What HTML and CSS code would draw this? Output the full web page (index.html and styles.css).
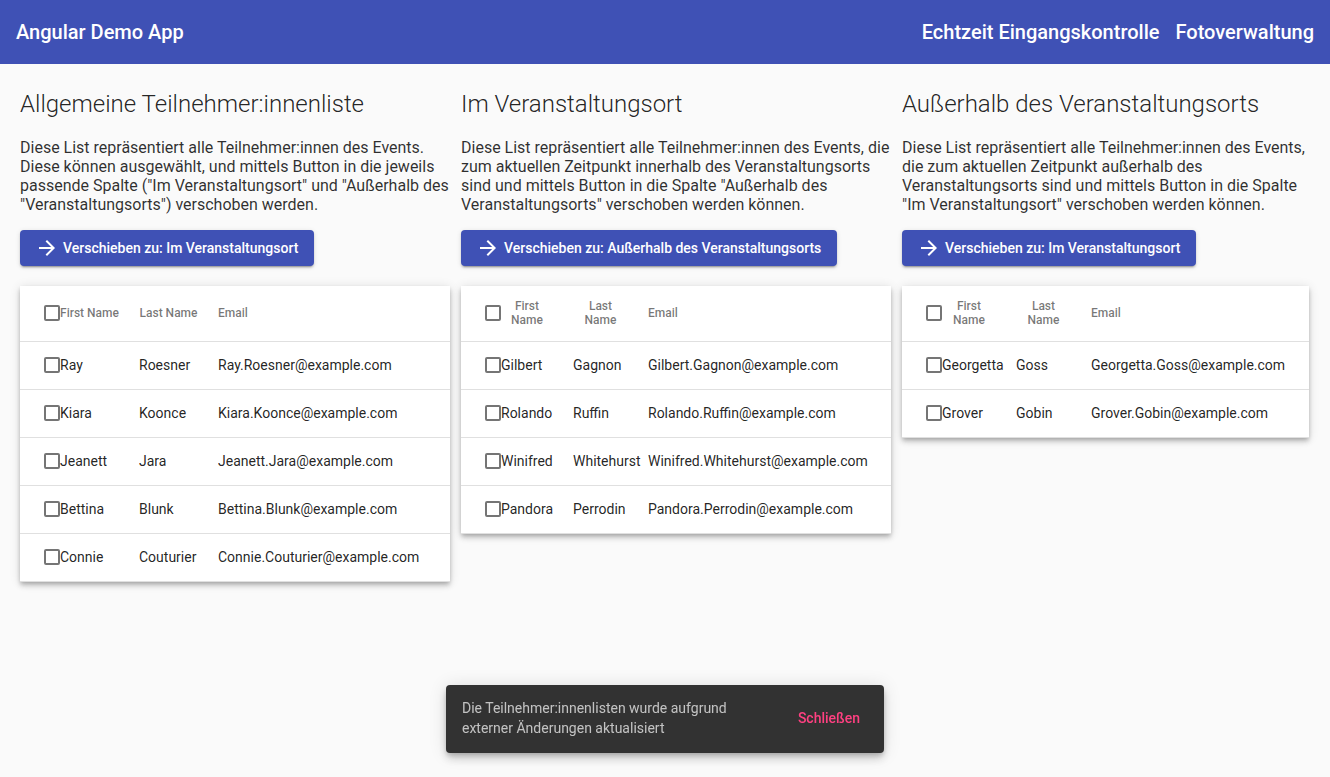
FILE: index.html
```html
<!DOCTYPE html>
<html lang="de">
<head>
<meta charset="utf-8">
<title>Angular Demo App</title>
<link rel="stylesheet" href="styles.css">
</head>
<body>
<header class="toolbar">
  <span class="app-title">Angular Demo App</span>
  <nav class="nav">
    <a class="nav-link">Echtzeit Eingangskontrolle</a>
    <a class="nav-link">Fotoverwaltung</a>
  </nav>
</header>

<main class="columns">
  <section class="column">
    <h2 class="column-title">Allgemeine Teilnehmer:innenliste</h2>
    <p class="column-text">Diese List repräsentiert alle Teilnehmer:innen des Events. Diese können ausgewählt, und mittels Button in die jeweils passende Spalte ("Im Veranstaltungsort" und "Außerhalb des "Veranstaltungsorts") verschoben werden.</p>
    <button class="move-btn"><svg class="arrow" viewBox="0 0 24 24" width="24" height="24"><path d="M12 4l-1.41 1.41L16.17 11H4v2h12.17l-5.58 5.59L12 20l8-8z" fill="#fff"/></svg><span>Verschieben zu: Im Veranstaltungsort</span></button>
    <div class="card table t1">
      <div class="row header-row"><div class="cell select"><span class="checkbox"></span></div><div class="cell hcell"><span>First Name</span></div><div class="cell hcell"><span>Last Name</span></div><div class="cell hcell email">Email</div></div>
      <div class="row"><div class="cell select"><span class="checkbox"></span></div><div class="cell">Ray</div><div class="cell">Roesner</div><div class="cell email">Ray.Roesner@example.com</div></div>
      <div class="row"><div class="cell select"><span class="checkbox"></span></div><div class="cell">Kiara</div><div class="cell">Koonce</div><div class="cell email">Kiara.Koonce@example.com</div></div>
      <div class="row"><div class="cell select"><span class="checkbox"></span></div><div class="cell">Jeanett</div><div class="cell">Jara</div><div class="cell email">Jeanett.Jara@example.com</div></div>
      <div class="row"><div class="cell select"><span class="checkbox"></span></div><div class="cell">Bettina</div><div class="cell">Blunk</div><div class="cell email">Bettina.Blunk@example.com</div></div>
      <div class="row"><div class="cell select"><span class="checkbox"></span></div><div class="cell">Connie</div><div class="cell">Couturier</div><div class="cell email">Connie.Couturier@example.com</div></div>
    </div>
  </section>

  <section class="column">
    <h2 class="column-title">Im Veranstaltungsort</h2>
    <p class="column-text">Diese List repräsentiert alle Teilnehmer:innen des Events, die zum aktuellen Zeitpunkt innerhalb des Veranstaltungsorts sind und mittels Button in die Spalte "Außerhalb des Veranstaltungsorts" verschoben werden können.</p>
    <button class="move-btn"><svg class="arrow" viewBox="0 0 24 24" width="24" height="24"><path d="M12 4l-1.41 1.41L16.17 11H4v2h12.17l-5.58 5.59L12 20l8-8z" fill="#fff"/></svg><span>Verschieben zu: Außerhalb des Veranstaltungsorts</span></button>
    <div class="card table t2">
      <div class="row header-row"><div class="cell select"><span class="checkbox"></span></div><div class="cell hcell wrap"><span>First Name</span></div><div class="cell hcell wrap"><span>Last Name</span></div><div class="cell hcell email">Email</div></div>
      <div class="row"><div class="cell select"><span class="checkbox"></span></div><div class="cell">Gilbert</div><div class="cell">Gagnon</div><div class="cell email">Gilbert.Gagnon@example.com</div></div>
      <div class="row"><div class="cell select"><span class="checkbox"></span></div><div class="cell">Rolando</div><div class="cell">Ruffin</div><div class="cell email">Rolando.Ruffin@example.com</div></div>
      <div class="row"><div class="cell select"><span class="checkbox"></span></div><div class="cell">Winifred</div><div class="cell">Whitehurst</div><div class="cell email">Winifred.Whitehurst@example.com</div></div>
      <div class="row"><div class="cell select"><span class="checkbox"></span></div><div class="cell">Pandora</div><div class="cell">Perrodin</div><div class="cell email">Pandora.Perrodin@example.com</div></div>
    </div>
  </section>

  <section class="column">
    <h2 class="column-title">Außerhalb des Veranstaltungsorts</h2>
    <p class="column-text">Diese List repräsentiert alle Teilnehmer:innen des Events, die zum aktuellen Zeitpunkt außerhalb des Veranstaltungsorts sind und mittels Button in die Spalte "Im Veranstaltungsort" verschoben werden können.</p>
    <button class="move-btn"><svg class="arrow" viewBox="0 0 24 24" width="24" height="24"><path d="M12 4l-1.41 1.41L16.17 11H4v2h12.17l-5.58 5.59L12 20l8-8z" fill="#fff"/></svg><span>Verschieben zu: Im Veranstaltungsort</span></button>
    <div class="card table t3">
      <div class="row header-row"><div class="cell select"><span class="checkbox"></span></div><div class="cell hcell wrap"><span>First Name</span></div><div class="cell hcell wrap"><span>Last Name</span></div><div class="cell hcell email">Email</div></div>
      <div class="row"><div class="cell select"><span class="checkbox"></span></div><div class="cell">Georgetta</div><div class="cell">Goss</div><div class="cell email">Georgetta.Goss@example.com</div></div>
      <div class="row"><div class="cell select"><span class="checkbox"></span></div><div class="cell">Grover</div><div class="cell">Gobin</div><div class="cell email">Grover.Gobin@example.com</div></div>
    </div>
  </section>
</main>

<div class="snackbar">
  <span class="snack-label">Die Teilnehmer:innenlisten wurde aufgrund externer Änderungen aktualisiert</span>
  <button class="snack-action">Schließen</button>
</div>
</body>
</html>
```

FILE: styles.css
```css
* { box-sizing: border-box; }

html, body {
  margin: 0;
  padding: 0;
}

body {
  background: #fafafa;
  font-family: Roboto, "Helvetica Neue", sans-serif;
  color: rgba(0, 0, 0, 0.87);
  width: 1330px;
  height: 777px;
  overflow: hidden;
}

.toolbar {
  height: 64px;
  background: #3f51b5;
  color: #fff;
  display: flex;
  align-items: center;
  padding: 0 16px;
  font-size: 20px;
  font-weight: 500;
}

.app-title { flex: 1; }

.nav {
  display: flex;
  gap: 16px;
}

.nav-link {
  color: #fff;
  text-decoration: none;
  cursor: pointer;
}

.columns {
  display: grid;
  grid-template-columns: 430px 430px 1fr;
  column-gap: 11px;
  padding: 24px 21px 0 20px;
  align-items: start;
}

.column {
  display: flex;
  flex-direction: column;
  align-items: flex-start;
}

.column-title {
  margin: 0 0 18px 0;
  font-size: 24px;
  line-height: 32px;
  font-weight: 300;
  color: rgba(0, 0, 0, 0.87);
}

.column-text {
  margin: 0 0 16px 0;
  font-size: 16px;
  line-height: 19px;
  color: rgba(0, 0, 0, 0.82);
}

.move-btn {
  display: flex;
  align-items: center;
  height: 36px;
  padding: 0 16px 0 15px;
  border: none;
  border-radius: 4px;
  background: #3f51b5;
  color: #fff;
  font-family: Roboto, sans-serif;
  font-size: 14px;
  font-weight: 500;
  box-shadow: 0 3px 1px -2px rgba(0,0,0,.2), 0 2px 2px 0 rgba(0,0,0,.14), 0 1px 5px 0 rgba(0,0,0,.12);
  cursor: pointer;
  margin-bottom: 20px;
}

.arrow {
  display: block;
  flex: none;
  margin-right: 4px;
}

.card {
  background: #fff;
  box-shadow: 0 2px 4px -1px rgba(0,0,0,.2), 0 4px 5px 0 rgba(0,0,0,.14), 0 1px 10px 0 rgba(0,0,0,.12);
}

.table { width: 100%; }

.row {
  display: grid;
  height: 48px;
  border-bottom: 1px solid rgba(0, 0, 0, 0.12);
  align-items: center;
  font-size: 14px;
  line-height: 16px;
  padding-bottom: 1px;
  color: rgba(0, 0, 0, 0.87);
}

.t1 .row { grid-template-columns: 40px 79px 79px 1fr; }
.t2 .row { grid-template-columns: 40px 72px 75px 1fr; }
.t3 .row { grid-template-columns: 40px 74px 75px 1fr; }

.header-row {
  height: 56px;
  font-size: 12px;
  font-weight: 500;
  color: rgba(0, 0, 0, 0.54);
}

.cell {
  white-space: nowrap;
  overflow: hidden;
}

.select {
  padding-left: 24px;
  display: flex;
  align-items: center;
}

.checkbox {
  display: block;
  width: 16px;
  height: 16px;
  border: 2px solid rgba(0, 0, 0, 0.54);
  border-radius: 2px;
}

.hcell {
  padding-right: 20px;
  text-align: center;
  line-height: 14px;
}

.hcell.wrap { white-space: normal; }

.hcell.wrap span {
  display: inline-block;
  width: min-content;
  text-align: center;
}

.hcell.email { text-align: left; }

.email { padding-right: 24px; }

.snackbar {
  position: fixed;
  left: 446px;
  bottom: 24px;
  width: 438px;
  min-height: 68px;
  background: #323232;
  border-radius: 4px;
  display: flex;
  align-items: center;
  justify-content: space-between;
  padding: 13px 16px 15px 16px;
  box-shadow: 0 3px 5px -1px rgba(0,0,0,.2), 0 6px 10px 0 rgba(0,0,0,.14), 0 1px 18px 0 rgba(0,0,0,.12);
}

.snack-label {
  max-width: 290px;
  font-size: 14px;
  line-height: 20px;
  color: rgba(255, 255, 255, 0.7);
}

.snack-action {
  background: none;
  border: none;
  color: #ff4081;
  font-family: Roboto, sans-serif;
  font-size: 14px;
  font-weight: 500;
  padding: 0 8px;
  height: 36px;
  cursor: pointer;
}
```
